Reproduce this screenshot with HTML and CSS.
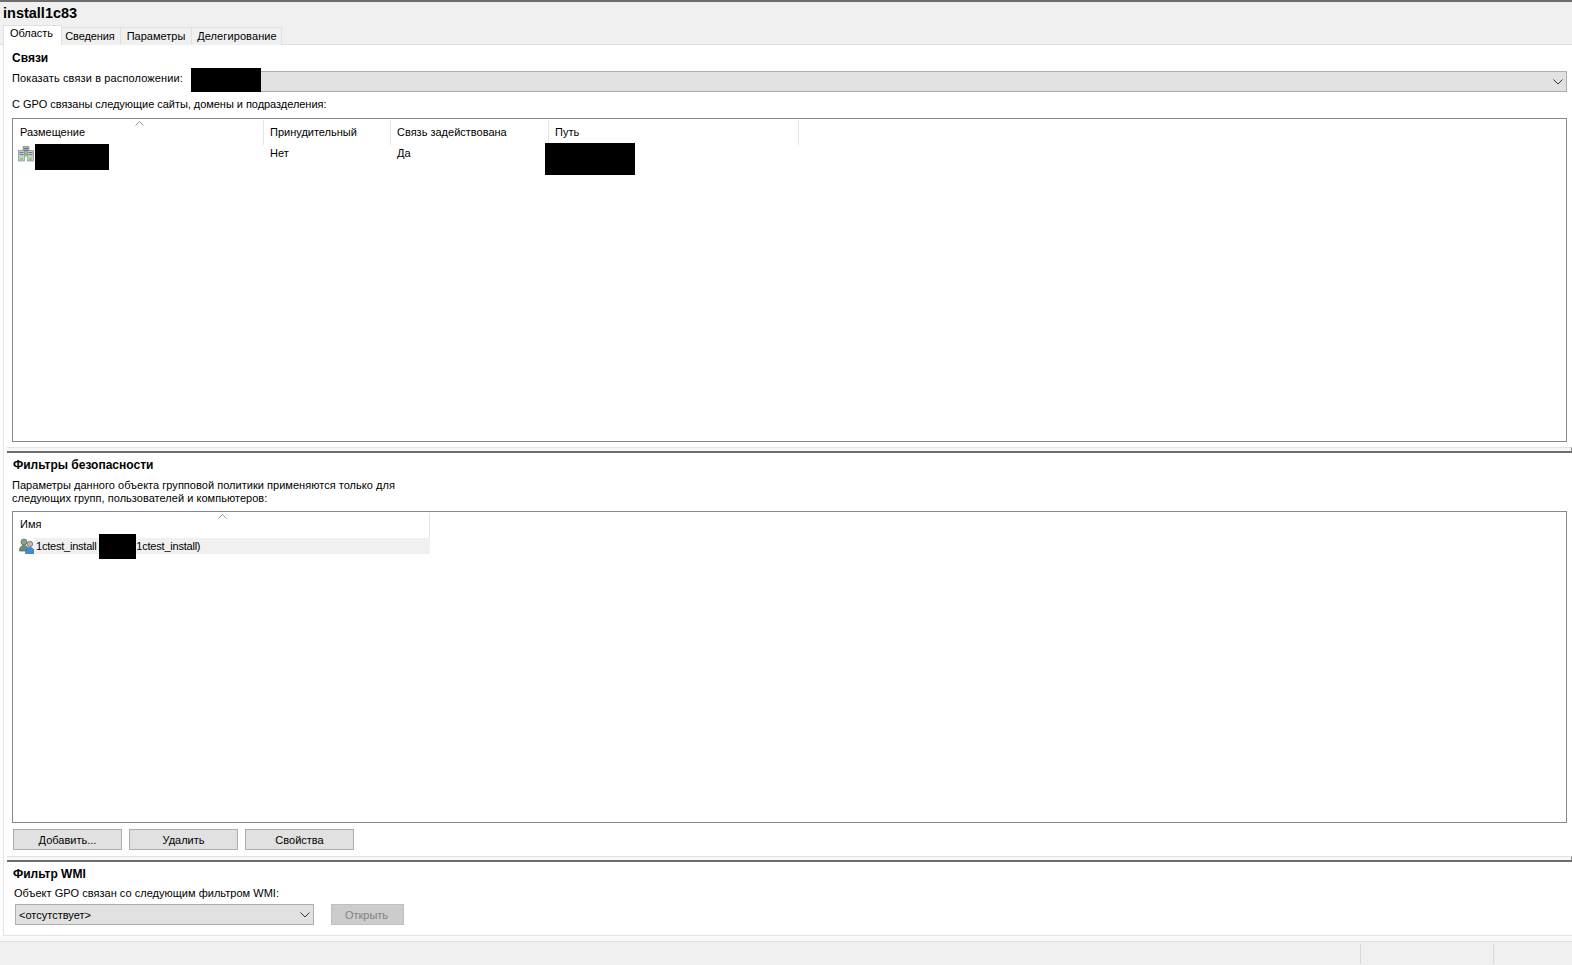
FILE: index.html
```html
<!DOCTYPE html>
<html lang="ru">
<head>
<meta charset="utf-8">
<title>install1c83</title>
<link rel="stylesheet" href="styles.css">
</head>
<body>
<div class="top-rule"></div>
<header class="header">
  <h1 class="title">install1c83</h1>
  <nav class="tabs">
    <div class="tab tab-active">Область</div>
    <div class="tab tab-info">Сведения</div>
    <div class="tab tab-params">Параметры</div>
    <div class="tab tab-deleg">Делегирование</div>
  </nav>
</header>
<main class="panel">
  <section class="links">
    <h2 class="heading">Связи</h2>
    <div class="location-row">
      <span class="location-label">Показать связи в расположении:</span>
      <div class="combo combo-wide">
        <span class="redact redact-combo"></span>
        <svg class="chevron" viewBox="0 0 10 6"><path d="M0.5 0.5 5 5 9.5 0.5" fill="none" stroke="#333" stroke-width="1"/></svg>
      </div>
    </div>
    <p class="links-note">С GPO связаны следующие сайты, домены и подразделения:</p>
    <div class="list list-links">
      <div class="list-head head-links">
        <div class="col col-sorted">Размещение
          <svg class="sort" viewBox="0 0 9 5"><path d="M0.5 4.5 4.5 0.5 8.5 4.5" fill="none" stroke="#9a9a9a" stroke-width="1"/></svg>
        </div>
        <div class="col">Принудительный</div>
        <div class="col">Связь задействована</div>
        <div class="col">Путь</div>
      </div>
      <div class="list-row head-links row-links">
        <div class="cell cell-icon">
          <svg class="icon" viewBox="0 0 16 16">
            <rect x="5" y="0.5" width="6" height="8" fill="#a5b0b5" stroke="#75808a" stroke-width="0.6"/>
            <path d="M6 2.500h4M6 4.500h4" stroke="#5b666c" stroke-width="0.8"/>
            <rect x="0.5" y="4.500" width="6" height="10.500" fill="#c6ced1" stroke="#75808a" stroke-width="0.6"/>
            <rect x="9.500" y="4.500" width="6" height="10.500" fill="#c6ced1" stroke="#75808a" stroke-width="0.6"/>
            <path d="M1.500 6.500h4M1.500 8.500h4M10.500 6.500h4M10.500 8.500h4" stroke="#5b666c" stroke-width="0.8"/>
            <rect x="2.500" y="12" width="2" height="2.500" fill="#6fdc28"/>
            <rect x="11.500" y="12" width="2" height="2.500" fill="#6fdc28"/>
            <rect x="7" y="8.500" width="2" height="2" fill="#6fdc28"/>
          </svg>
          <span class="redact redact-site"></span>
        </div>
        <div class="cell">Нет</div>
        <div class="cell">Да</div>
        <div class="cell"><span class="redact redact-path"></span></div>
      </div>
    </div>
  </section>
  <div class="splitter"></div>
  <section class="security">
    <h2 class="heading heading-sec">Фильтры безопасности</h2>
    <p class="sec-note">Параметры данного объекта групповой политики применяются только для<br>следующих групп, пользователей и компьютеров:</p>
    <div class="list list-sec">
      <div class="list-head head-sec">
        <div class="col col-sorted">Имя
          <svg class="sort" viewBox="0 0 9 5"><path d="M0.5 4.5 4.5 0.5 8.5 4.5" fill="none" stroke="#9a9a9a" stroke-width="1"/></svg>
        </div>
      </div>
      <div class="sec-row">
        <svg class="icon icon-users" viewBox="0 0 16 16">
          <circle cx="5" cy="4" r="3" fill="#8aa08c" stroke="#4f6652" stroke-width="0.7"/>
          <path d="M0.5 13c0-4 2-5.500 4.500-5.500s4.500 1.500 4.500 5.500z" fill="#6f8c74" stroke="#4f6652" stroke-width="0.7"/>
          <circle cx="11" cy="6" r="2.800" fill="#c9b49a" stroke="#5c6670" stroke-width="0.7"/>
          <path d="M6.500 15.500c0-4 2-6 4.500-6s4.500 2 4.500 6z" fill="#3f8fd0" stroke="#2a6aa5" stroke-width="0.7"/>
        </svg>
        <div class="sec-name">1ctest_install <span class="redact redact-name"></span>1ctest_install)</div>
      </div>
    </div>
    <div class="actions">
      <button class="btn" type="button">Добавить...</button>
      <button class="btn" type="button">Удалить</button>
      <button class="btn" type="button">Свойства</button>
    </div>
  </section>
  <div class="splitter"></div>
  <section class="wmi">
    <h2 class="heading heading-wmi">Фильтр WMI</h2>
    <p class="wmi-note">Объект GPO связан со следующим фильтром WMI:</p>
    <div class="wmi-row">
      <div class="combo combo-wmi">&lt;отсутствует&gt;
        <svg class="chevron" viewBox="0 0 10 6"><path d="M0.5 0.500 5 5 9.500 0.500" fill="none" stroke="#333" stroke-width="1"/></svg>
      </div>
      <button class="btn btn-disabled" type="button" disabled>Открыть</button>
    </div>
  </section>
</main>
<div class="gap-strip"></div>
<footer class="status">
  <div class="status-main"></div>
  <div class="status-cell status-mid"></div>
  <div class="status-cell status-end"></div>
</footer>
</body>
</html>
```

FILE: styles.css
```css
* { box-sizing: border-box; }
html, body { margin: 0; padding: 0; height: 965px; overflow: hidden; }
body {
  display: flex;
  flex-direction: column;
  background: #fff;
  color: #000;
  font-family: "Liberation Sans", Arial, sans-serif;
  font-size: 11px;
  line-height: 14px;
}
h1, h2, p { margin: 0; }

.top-rule { height: 2px; background: #6d6d6d; flex: none; }

.header {
  flex: none;
  height: 43px;
  background: #f0f0f0;
  border-bottom: 1px solid #e0e0e0;
  padding-left: 3px;
  display: flex;
  flex-direction: column;
}
.title { font-size: 14.5px; line-height: 16px; font-weight: 700; margin-top: 3px; }
.tabs { display: flex; align-items: flex-end; margin-top: 4px; height: 20px; }
.tab {
  height: 18px;
  margin-bottom: -1px;
  padding-top: 1px;
  text-align: center;
  background: #f0f0f0;
  border: 1px solid #e0e0e0;
  border-bottom: 0;
  border-left: 0;
}
.tab-active { width: 59px; height: 20px; background: #fff; border-left: 1px solid #e0e0e0; padding: 0 2px 0 0; position: relative; }
.tab-info { width: 59px; letter-spacing: -0.1px; padding-right: 2px; }
.tab-params { width: 71px; }
.tab-deleg { width: 90px; letter-spacing: 0.1px; padding-left: 1px; }

.panel {
  flex: none;
  height: 891px;
  margin-left: 3px;
  border-left: 1px solid #e3e3e3;
  border-bottom: 1px solid #e3e3e3;
  display: flex;
  flex-direction: column;
}

.heading { font-size: 12px; line-height: 16px; font-weight: 700; }

.links {
  flex: none;
  height: 402px;
  padding: 5px 5px 5px 8px;
  display: flex;
  flex-direction: column;
}
.location-row { display: flex; align-items: flex-start; margin-top: 5px; height: 21px; }
.location-label { width: 179px; flex: none; white-space: nowrap; letter-spacing: 0.13px; }
.combo {
  position: relative;
  height: 21px;
  background: #e1e1e1;
  border: 1px solid #adadad;
  display: flex;
  align-items: center;
  justify-content: space-between;
}
.combo-wide { flex: 1; }
.chevron { width: 10px; height: 6px; position: absolute; right: 3px; top: 7px; }
.redact { display: block; background: #000; position: absolute; }
.redact-combo { left: -1px; top: -4px; width: 70px; height: 24px; }

.links-note { margin-top: 5px; letter-spacing: -0.04px; }

.list {
  position: relative;
  border: 1px solid #828790;
  background: #fff;
}
.list-links { margin-top: 7px; flex: 1; }
.list-head { display: grid; height: 25px; margin-top: 1px; }
.head-links { grid-template-columns: 251px 127px 158px 250px; }
.head-sec { grid-template-columns: 417px; }
.col {
  position: relative;
  padding: 5px 0 0 6px;
  border-right: 1px solid #e5e5e5;
}
.col:first-child { padding-left: 7px; }
.sort { position: absolute; width: 9px; height: 5px; top: 1px; left: 122px; }
.head-sec .col { padding-top: 4px; }
.head-sec .sort { left: 205px; }

.list-row { display: grid; margin-top: 1px; }
.cell { padding-left: 6px; position: relative; }
.cell-icon { padding: 0; height: 16px; }
.icon { width: 16px; height: 16px; display: block; margin-left: 5px; }
.redact-site { left: 22px; top: -2px; width: 74px; height: 26px; }
.redact-path { left: -4px; top: -3px; width: 90px; height: 32px; }

.splitter {
  flex: none;
  height: 6px;
  margin-left: 3px;
  background: #f7f7f7;
  border-top: 1px solid #e3e3e3;
  border-bottom: 2px solid #6d6d6d;
  border-right: 1px solid #8a8a8a;
}

.security {
  flex: none;
  height: 403px;
  padding: 4px 5px 0 8px;
  display: flex;
  flex-direction: column;
}
.heading-sec { margin-left: 1px; }
.sec-note { margin-top: 6px; line-height: 13px; letter-spacing: 0.03px; }
.list-sec { margin-top: 6px; height: 312px; flex: none; }
.sec-row { display: flex; align-items: center; position: relative; height: 16px; }
.icon-users { margin-left: 6px; flex: none; }
.sec-name {
  width: 396px;
  height: 16px;
  line-height: 17px;
  margin-left: -1px;
  padding-left: 2px;
  background: #f0f0f0;
  letter-spacing: -0.22px;
}
.redact-name { display: inline-block; position: static; width: 37px; height: 25px; margin: -7px 0 -5px; vertical-align: middle; }

.actions { display: flex; gap: 7px; margin: 6px 0 0 1px; }
.btn {
  width: 109px;
  height: 21px;
  padding: 0;
  background: #e1e1e1;
  border: 1px solid #adadad;
  font: inherit;
  color: #000;
}

.wmi { flex: 1; padding: 4px 0 0 8px; display: flex; flex-direction: column; }
.heading-wmi { margin-left: 1px; }
.wmi-note { margin: 4px 0 0 2px; letter-spacing: 0.02px; }
.wmi-row { display: flex; gap: 17px; margin: 4px 0 0 3px; }
.combo-wmi { width: 299px; padding-left: 3px; }
.btn-disabled { width: 73px; padding-right: 2px; background: #cccccc; border-color: #bfbfbf; color: #838383; }

.gap-strip { flex: none; height: 6px; background: #f9f9f9; border-bottom: 1px solid #dedede; }

.status { flex: 1; background: #f0f0f0; display: flex; padding: 2px 0 1px; }
.status-main { flex: none; width: 1360px; }
.status-cell { border-left: 1px solid #d7d7d7; }
.status-mid { width: 133px; flex: none; }
.status-end { flex: 1; }
```
